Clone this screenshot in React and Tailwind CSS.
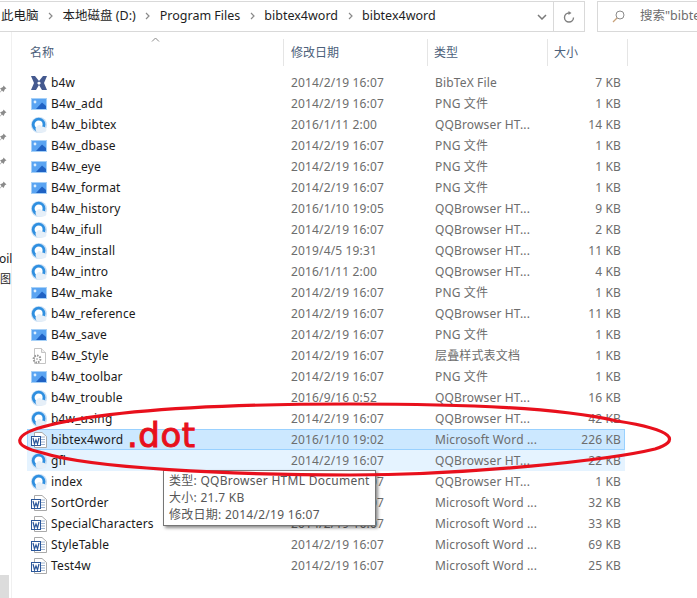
const font = { fontFamily: '"Noto Sans", "Noto Sans CJK SC", sans-serif' };

const files = [
  ['b4w', '2014/2/19 16:07', 'BibTeX File', '7 KB', 'bib'],
  ['B4w_add', '2014/2/19 16:07', 'PNG 文件', '1 KB', 'png'],
  ['b4w_bibtex', '2016/1/11 2:00', 'QQBrowser HT...', '14 KB', 'qq'],
  ['B4w_dbase', '2014/2/19 16:07', 'PNG 文件', '1 KB', 'png'],
  ['B4w_eye', '2014/2/19 16:07', 'PNG 文件', '1 KB', 'png'],
  ['B4w_format', '2014/2/19 16:07', 'PNG 文件', '1 KB', 'png'],
  ['b4w_history', '2016/1/10 19:05', 'QQBrowser HT...', '9 KB', 'qq'],
  ['b4w_ifull', '2014/2/19 16:07', 'QQBrowser HT...', '2 KB', 'qq'],
  ['b4w_install', '2019/4/5 19:31', 'QQBrowser HT...', '11 KB', 'qq'],
  ['b4w_intro', '2016/1/11 2:00', 'QQBrowser HT...', '4 KB', 'qq'],
  ['B4w_make', '2014/2/19 16:07', 'PNG 文件', '1 KB', 'png'],
  ['b4w_reference', '2014/2/19 16:07', 'QQBrowser HT...', '11 KB', 'qq'],
  ['B4w_save', '2014/2/19 16:07', 'PNG 文件', '1 KB', 'png'],
  ['B4w_Style', '2014/2/19 16:07', '层叠样式表文档', '1 KB', 'css'],
  ['b4w_toolbar', '2014/2/19 16:07', 'PNG 文件', '1 KB', 'png'],
  ['b4w_trouble', '2016/9/16 0:52', 'QQBrowser HT...', '16 KB', 'qq'],
  ['b4w_using', '2014/2/19 16:07', 'QQBrowser HT...', '42 KB', 'qq'],
  ['bibtex4word', '2016/1/10 19:02', 'Microsoft Word ...', '226 KB', 'word'],
  ['gfl', '2014/2/19 16:07', 'QQBrowser HT...', '22 KB', 'qq'],
  ['index', '2014/2/19 16:07', 'QQBrowser HT...', '1 KB', 'qq'],
  ['SortOrder', '2014/2/19 16:07', 'Microsoft Word ...', '32 KB', 'word'],
  ['SpecialCharacters', '2014/2/19 16:07', 'Microsoft Word ...', '33 KB', 'word'],
  ['StyleTable', '2014/2/19 16:07', 'Microsoft Word ...', '69 KB', 'word'],
  ['Test4w', '2014/2/19 16:07', 'Microsoft Word ...', '25 KB', 'word'],
];

const FileIcon = ({ type }) => {
  if (type === 'bib')
    return (
      <svg width="16" height="16" viewBox="0 0 16 16" className="shrink-0">
        <path d="M0 1 L4 1 L8 6 L12 1 L16 1 L13 8 L16 15 L11 15 L8 10 L5 15 L0 15 L3 8 Z" fill="#44598f" />
        <path d="M6 8 L8 6.5 L10 8 L8 10 Z" fill="#fff" />
      </svg>
    );
  if (type === 'png')
    return (
      <svg width="16" height="16" viewBox="0 0 16 16" className="shrink-0">
        <rect x="0" y="2" width="16" height="12" fill="#a6d0f7" />
        <rect x="1" y="3" width="14" height="10" fill="#5aa4f2" />
        <path d="M5 13 L11 6.5 L15 10 L15 13 Z" fill="#1f62c4" />
        <circle cx="4" cy="6" r="1.4" fill="#dcefff" />
      </svg>
    );
  if (type === 'qq')
    return (
      <svg width="16" height="16" viewBox="0 0 16 16" className="shrink-0">
        <circle cx="8" cy="8" r="8" fill="#c4dcf3" />
        <circle cx="7.6" cy="7.6" r="5.4" fill="#fff" stroke="#2f8fe0" strokeWidth="2.8" />
        <path d="M4.5 11.5 C6.5 7.5 9 7 10.8 9.5 C13 9.5 15.5 11 15.5 13 C15.5 15 13 15.7 11 15.7 L7 15.7 C5.5 15 4.5 13 4.5 11.5 Z" fill="#e6eff8" />
      </svg>
    );
  if (type === 'css')
    return (
      <svg width="16" height="16" viewBox="0 0 16 16" className="shrink-0">
        <path d="M3.5 0.5 L10.5 0.5 L14.5 4.5 L14.5 15.5 L3.5 15.5 Z" fill="#fff" stroke="#c4c4c4" />
        <path d="M10.5 0.5 L10.5 4.5 L14.5 4.5" fill="#eee" stroke="#c4c4c4" />
        <circle cx="6" cy="11" r="3.4" fill="none" stroke="#9a9a9a" strokeWidth="2" strokeDasharray="1.6 1" />
        <circle cx="6" cy="11" r="1" fill="#bbb" />
      </svg>
    );
  return (
    <svg width="16" height="16" viewBox="0 0 16 16" className="shrink-0">
      <path d="M3.5 0.5 L11 0.5 L15.5 4.5 L15.5 15.5 L3.5 15.5 Z" fill="#fff" stroke="#a9a9a9" />
      <path d="M10 5 H14 M10 7.5 H14 M10 10 H14 M10 12.5 H14" stroke="#9fb4d0" />
      <rect x="0" y="4" width="10" height="10" fill="#2b579a" />
      <rect x="1" y="5" width="8" height="8" fill="#fff" />
      <path d="M2 6 L3.5 12 L5 8 L6.5 12 L8 6" fill="none" stroke="#2b579a" strokeWidth="1.2" />
    </svg>
  );
};

const Pin = () => (
  <svg width="9" height="9" viewBox="0 0 9 9" className="-ml-[2px]">
    <path d="M1 8.5 L3.5 5 L2 3.5 L5 2 L5.5 0.5 L8.5 3.5 L7 4 L5.5 7 L4 5.5 Z" fill="#8a8a8a" />
  </svg>
);

const Crumb = ({ children }) => (
  <>
    <span className="text-[12.5px] text-[#1e1e1e]">{children}</span>
    <svg width="5" height="8" viewBox="0 0 5 8" className="mx-[9.5px]">
      <path d="M1 1 L4 4 L1 7" fill="none" stroke="#8a8a8a" strokeWidth="1.2" />
    </svg>
  </>
);

const App = () => {
  return (
    <div className="relative h-[598px] w-[697px] overflow-hidden bg-white" style={font}>
      {/* address bar */}
      <div className="flex h-[32px] items-stretch pt-[1px]">
        <div className="flex w-[585px] items-center overflow-hidden border-y border-r border-[#d9d9d9] pl-[1px]">
          <div className="flex flex-1 items-center pb-[1px] whitespace-nowrap">
            <Crumb>此电脑</Crumb>
            <Crumb>本地磁盘 (D:)</Crumb>
            <Crumb>Program Files</Crumb>
            <Crumb>bibtex4word</Crumb>
            <span className="text-[12.5px] text-[#1e1e1e]">bibtex4word</span>
          </div>
          <div className="flex w-[23px] justify-center">
            <svg width="10" height="6" viewBox="0 0 10 6">
              <path d="M1 1 L5 5 L9 1" fill="none" stroke="#7a7a7a" strokeWidth="1.5" />
            </svg>
          </div>
          <div className="flex h-full w-[31px] items-center justify-center border-l border-[#d9d9d9]">
            <svg width="12" height="12" viewBox="0 0 12 12">
              <path d="M6 2 A4.5 4.5 0 1 0 10.5 6.5" fill="none" stroke="#808080" strokeWidth="1.4" />
              <path d="M5.5 0 L8.5 2 L5.5 4 Z" fill="#808080" />
            </svg>
          </div>
        </div>
        <div className="ml-[12px] flex flex-1 items-center overflow-hidden border-y border-l border-[#d9d9d9] pl-[14px] whitespace-nowrap">
          <svg width="13" height="13" viewBox="0 0 13 13" className="shrink-0">
            <circle cx="8" cy="5" r="4" fill="none" stroke="#8a8a8a" />
            <path d="M5 8 L1 12" stroke="#c9a27a" strokeWidth="1.2" />
          </svg>
          <span className="ml-[15px] text-[12.5px] text-[#6d6d6d]">搜索"bibtex4word"</span>
        </div>
      </div>

      <div className="flex">
        {/* collapsed navigation pane */}
        <div className="flex h-[566px] w-[12px] shrink-0 flex-col justify-between border-r border-[#f0f0f0]">
          <div>
            <div className="flex flex-col gap-[15px] pt-[53px]">
              <Pin />
              <Pin />
              <Pin />
              <Pin />
              <Pin />
            </div>
            <div className="mt-[61px] -ml-[1px] text-[12px] leading-[16px] text-[#1a1a1a]">oil</div>
            <div className="mt-[5px] text-[11px] leading-[14px] text-[#1a1a1a]">图</div>
          </div>
          <div className="h-[23px] w-[9px] bg-[#dcdcdc]" />
        </div>

        <div className="w-[617px] pl-[15px]">
          {/* column headers */}
          <div className="relative mt-[7px] flex h-[27px] items-stretch text-[12px] text-[#4c607a]">
            <div className="flex w-[257px] items-center border-r border-[#e5e5e5] pl-[3px]">名称</div>
            <div className="flex w-[144px] items-center border-r border-[#e5e5e5] pl-[7px]">修改日期</div>
            <div className="flex w-[120px] items-center border-r border-[#e5e5e5] pl-[6px]">类型</div>
            <div className="flex w-[80px] items-center border-r border-[#e5e5e5] pl-[6px]">大小</div>
            <svg width="9" height="5" viewBox="0 0 9 5" className="absolute top-[-2px] left-[124px]">
              <path d="M1 4.5 L4.5 1 L8 4.5" fill="none" stroke="#8a8a8a" />
            </svg>
          </div>

          {/* file rows */}
          <div className="mt-[6px] w-[598px]">
            {files.map(([name, date, type, size, icon]) => (
              <div
                key={name}
                className={`flex h-[21px] items-center border text-[12px] tracking-[0.15px] whitespace-nowrap ${
                  name === 'bibtex4word'
                    ? 'border-[#99d1ff] bg-[#cce8ff]'
                    : name === 'gfl'
                      ? 'border-transparent bg-[#e5f3ff]'
                      : 'border-transparent'
                }`}
              >
                <div className="flex w-[256px] items-center gap-[4px] pl-[3px] text-[#1a1a1a]">
                  <FileIcon type={icon} />
                  <span>{name}</span>
                </div>
                <div className="w-[144px] pl-[7px] text-[#6d6d6d]">{date}</div>
                <div className="w-[120px] pl-[7px] text-[#6d6d6d]">{type}</div>
                <div className="w-[73px] text-right text-[#6d6d6d]">{size}</div>
              </div>
            ))}
          </div>
        </div>
      </div>

      {/* tooltip */}
      <div className="absolute top-[470px] left-[163px] h-[56px] w-[213px] border border-[#767676] bg-white pt-[1px] pl-[5px] text-[12px] leading-[17px] tracking-[0.27px] whitespace-nowrap text-[#575757] shadow-[2px_2px_3px_rgba(0,0,0,0.45)]">
        <div>类型: QQBrowser HTML Document</div>
        <div>大小: 21.7 KB</div>
        <div>修改日期: 2014/2/19 16:07</div>
      </div>

      {/* red annotation */}
      <svg width="697" height="598" viewBox="0 0 697 598" className="pointer-events-none absolute top-0 left-0">
        <path
          d="M350 404 C240 404 120 408 50 425 C12 434 10 446 43 453 C90 468 230 475 350 475 C470 475 610 460 655 449 C680 441 676 430 617 421 C560 408 470 404 350 404 Z"
          fill="none"
          stroke="#e8101c"
          strokeWidth="3.2"
        />
      </svg>
      <span
        className="absolute top-[413px] left-[127px] text-[34px] leading-[44px] font-normal tracking-[0.5px] text-[#e8101c] [-webkit-text-stroke:1px_#e8101c]"
        style={{ fontFamily: '"DejaVu Sans", sans-serif' }}
      >
        .dot
      </span>
    </div>
  );
};

export default App;
